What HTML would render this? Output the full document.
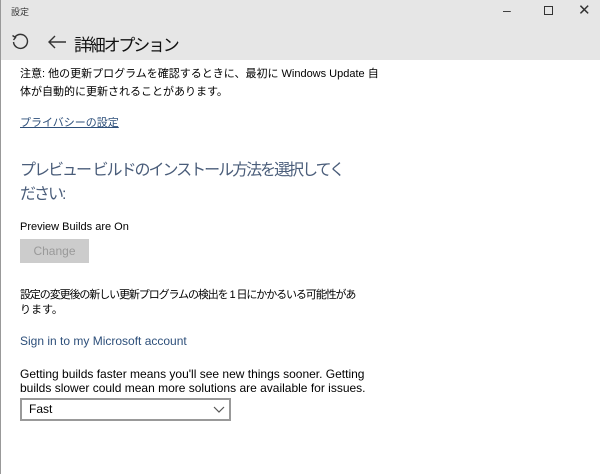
<!DOCTYPE html>
<html><head><meta charset="utf-8"><style>
*{margin:0;padding:0;box-sizing:border-box}
body{width:600px;height:474px;overflow:hidden;background:#fff;font-family:"Liberation Sans","Noto Sans CJK JP",sans-serif;color:#000;position:relative;border-left:1px solid #999}
.hdr{position:absolute;left:0;top:0;width:600px;height:60px;background:#e6e6e6}
.t{position:absolute;white-space:nowrap}
.s{font-size:12px;line-height:18px}
.j{font-size:11px;line-height:18px}
</style></head><body>
<div class="hdr"></div>
<div class="t" style="left:10px;top:5px;font-size:9px;color:#333">設定</div>
<div class="t" style="left:502px;top:2px;font-size:14px;color:#333">–</div>
<div class="t" style="left:543px;top:6px;width:9px;height:9px;border:1px solid #333"></div>
<div class="t" style="left:577px;top:1px;font-size:15px;color:#333">✕</div>
<svg style="position:absolute;left:10px;top:33px" width="18" height="18" viewBox="0 0 18 18"><path d="M4 4 A7 7 0 1 1 2.5 9" fill="none" stroke="#333" stroke-width="1.4"/><path d="M1.5 2.5 L4.5 4.5 L2.5 7" fill="none" stroke="#333" stroke-width="1.4"/></svg>
<svg style="position:absolute;left:46px;top:34px" width="20" height="16" viewBox="0 0 20 16"><path d="M19 8H2M8 2L2 8L8 14" fill="none" stroke="#333" stroke-width="1.4"/></svg>
<div class="t" style="left:73px;top:31px;font-size:17px;letter-spacing:-2.2px;color:#111">詳細オプション</div>
<div class="t j" style="left:19px;top:65px">注意: 他の更新プログラムを確認するときに、最初に Windows Update 自</div>
<div class="t j" style="left:19px;top:83px">体が自動的に更新されることがあります。</div>
<div class="t j" style="left:19px;top:114px;color:#2d4f7a;text-decoration:underline">プライバシーの設定</div>
<div class="t" style="left:19px;top:159px;font-size:16px;letter-spacing:-2px;line-height:24px;color:#4a5d7a">プレビュー ビルドのインストール方法を選択してく</div>
<div class="t" style="left:19px;top:183px;font-size:16px;letter-spacing:-2px;line-height:24px;color:#4a5d7a">ださい:</div>
<div class="t j" style="left:19px;top:218px">Preview Builds are On</div>
<div class="t" style="left:19px;top:239px;width:69px;height:24px;background:#ccc;color:#999;font-size:12px;line-height:24px;text-align:center">Change</div>
<div class="t j" style="left:19px;top:286px;letter-spacing:-1.1px">設定の変更後の新しい更新プログラムの検出を 1 日にかかるいる可能性があ</div>
<div class="t j" style="left:19px;top:301px">ります。</div>
<div class="t s" style="left:19px;top:332px;color:#2d4f7a">Sign in to my Microsoft account</div>
<div class="t s" style="left:19px;top:365px">Getting builds faster means you'll see new things sooner. Getting</div>
<div class="t s" style="left:19px;top:379px">builds slower could mean more solutions are available for issues.</div>
<div class="t" style="left:19px;top:398px;width:211px;height:23px;border:2px solid #999"></div>
<div class="t s" style="left:28px;top:400px">Fast</div>
<svg style="position:absolute;left:212px;top:406px" width="12" height="8" viewBox="0 0 12 8"><path d="M1 1L6 6L11 1" fill="none" stroke="#555" stroke-width="1.2"/></svg>
</body></html>
